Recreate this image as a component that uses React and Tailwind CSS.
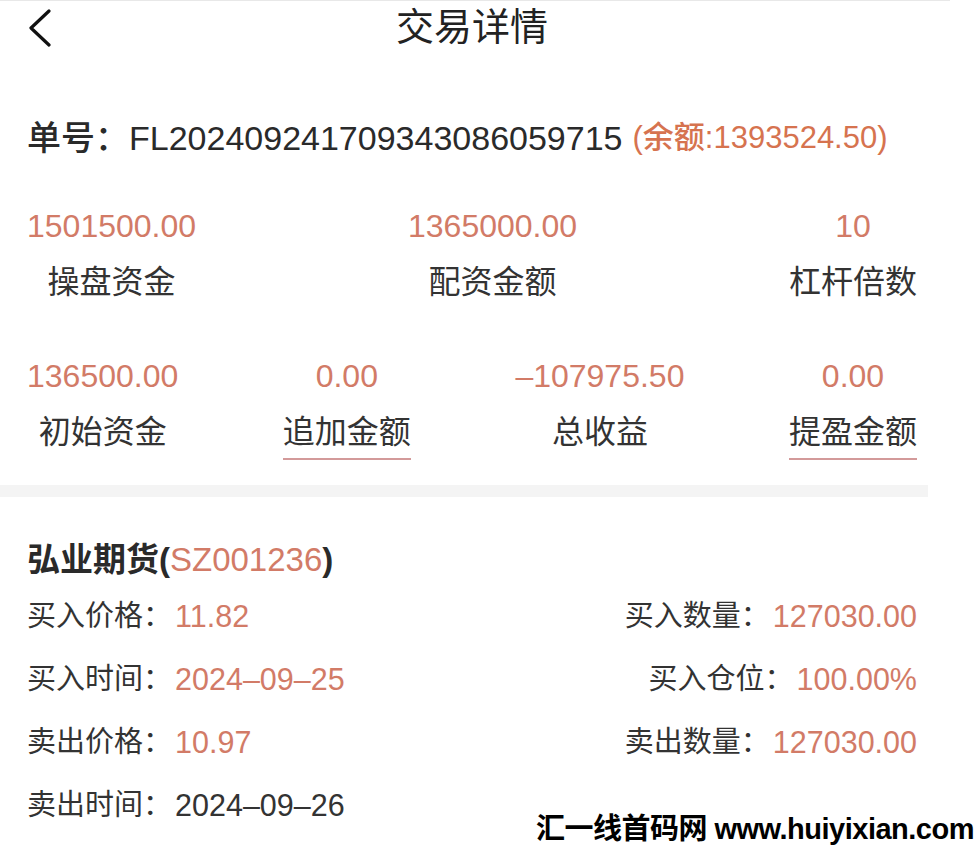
import React from 'react';

const font = { fontFamily: '"Liberation Sans", "Noto Sans CJK SC", sans-serif' };

// Stat cell: value on top, label below, optional underline
function Stat({ value, label, underline }) {
  return (
    <div className="flex flex-col items-center">
      <div className="h-[40px] flex items-center text-[32px] text-[#d27b67] whitespace-nowrap">{value}</div>
      <div className="mt-[16px] h-[40px] flex items-center text-[32px] text-[#333] whitespace-nowrap">{label}</div>
      {underline && <div className="mt-[6px] h-[2px] w-full bg-[#d39a9a]"></div>}
    </div>
  );
}

function Detail({ label, value, dark }) {
  return (
    <div className="flex items-center whitespace-nowrap">
      <span className="text-[29px] text-[#333]">{label}：</span>
      <span className={`text-[30.5px] ml-[3px] ${dark ? 'text-[#333]' : 'text-[#d27b67]'}`}>{value}</span>
    </div>
  );
}

export default function App() {
  return (
    <div className="relative w-[979px] h-[846px] bg-white overflow-hidden" style={font}>
      <div className="w-[950px] h-px bg-[#e8e8e8]"></div>

      {/* Header */}
      <div className="w-[944px] h-[52px] flex items-center justify-center relative">
        <svg className="absolute left-[26px] top-[8px]" width="28" height="38" viewBox="0 0 28 38" fill="none">
          <path d="M23 2 L5 19 L23 36" stroke="#111" strokeWidth="3.2" strokeLinecap="round" strokeLinejoin="round" />
        </svg>
        <h1 className="text-[38px] text-[#222] leading-none">交易详情</h1>
      </div>

      {/* Order number */}
      <div className="mt-[65px] h-[40px] pl-[27px] flex items-center whitespace-nowrap">
        <span className="text-[34px] font-medium text-[#2a2a2a]">单号：FL202409241709343086059715</span>
        <span className="ml-[10px] text-[31px] font-medium text-[#d6734f]">(余额:1393524.50)</span>
      </div>

      {/* Stats */}
      <div className="mt-[48px] w-[944px] px-[27px] flex justify-between items-start">
        <Stat value="1501500.00" label="操盘资金" />
        <Stat value="1365000.00" label="配资金额" />
        <Stat value="10" label="杠杆倍数" />
      </div>
      <div className="mt-[54px] w-[944px] px-[27px] flex justify-between items-start">
        <Stat value="136500.00" label="初始资金" />
        <Stat value="0.00" label="追加金额" underline />
        <Stat value="–107975.50" label="总收益" />
        <Stat value="0.00" label="提盈金额" underline />
      </div>

      <div className="mt-[25px] w-[928px] h-[12px] bg-[#f4f4f4]"></div>

      {/* Stock info */}
      <div className="mt-[43px] h-[40px] pl-[27px] flex items-center text-[33px] font-bold text-[#2a2a2a] whitespace-nowrap">
        弘业期货(<span className="text-[#d27b67] font-medium">SZ001236</span>)
      </div>
      <div className="mt-[17px] w-[944px] px-[27px] flex flex-col gap-[23px]">
        <div className="h-[40px] flex justify-between">
          <Detail label="买入价格" value="11.82" />
          <Detail label="买入数量" value="127030.00" />
        </div>
        <div className="h-[40px] flex justify-between">
          <Detail label="买入时间" value="2024–09–25" />
          <Detail label="买入仓位" value="100.00%" />
        </div>
        <div className="h-[40px] flex justify-between">
          <Detail label="卖出价格" value="10.97" />
          <Detail label="卖出数量" value="127030.00" />
        </div>
        <div className="h-[40px] flex justify-between">
          <Detail label="卖出时间" value="2024–09–26" dark />
        </div>
      </div>

      {/* Watermark */}
      <div className="absolute right-[5px] bottom-[2px] text-[29px] font-bold text-black whitespace-nowrap leading-none tracking-[-0.5px]">
        汇一线首码网 www.huiyixian.com
      </div>
    </div>
  );
}
